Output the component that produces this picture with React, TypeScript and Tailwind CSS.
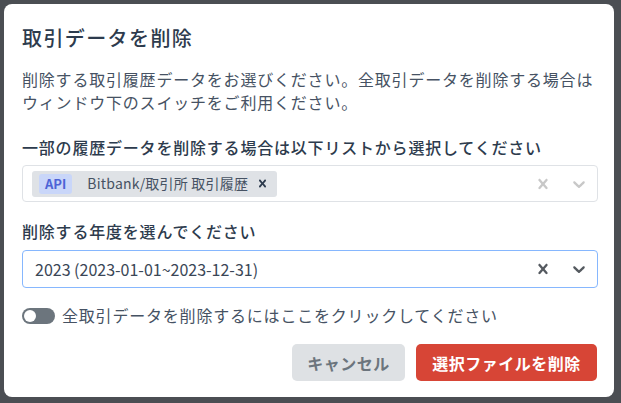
import React from "react";

const font = { fontFamily: '"Noto Sans CJK JP", "Noto Sans", sans-serif' };

const CrossIcon = ({ className }: { className?: string }) => (
  <svg viewBox="0 0 20 20" className={className} fill="currentColor">
    <path d="M14.348 14.849c-0.469 0.469-1.229 0.469-1.697 0l-2.651-3.030-2.651 3.029c-0.469 0.469-1.229 0.469-1.697 0-0.469-0.469-0.469-1.229 0-1.697l2.758-3.15-2.759-3.152c-0.469-0.469-0.469-1.228 0-1.697s1.228-0.469 1.697 0l2.652 3.031 2.651-3.031c0.469-0.469 1.228-0.469 1.697 0s0.469 1.229 0 1.697l-2.758 3.152 2.758 3.15c0.469 0.469 0.469 1.229 0 1.698z" />
  </svg>
);

const ChevronIcon = ({ className }: { className?: string }) => (
  <svg viewBox="0 0 20 20" className={className} fill="currentColor">
    <path d="M4.516 7.548c0.436-0.446 1.043-0.481 1.576 0l3.908 3.747 3.908-3.747c0.533-0.481 1.141-0.446 1.574 0 0.436 0.445 0.408 1.197 0 1.615-0.406 0.418-4.695 4.502-4.695 4.502-0.217 0.223-0.502 0.335-0.787 0.335s-0.57-0.112-0.789-0.335c0 0-4.287-4.084-4.695-4.502s-0.436-1.17 0-1.615z" />
  </svg>
);

export default function App() {
  return (
    <div className="w-[621px] h-[403px] bg-[#4b4e53] pt-[4px] pl-[4px] overflow-hidden" style={font}>
      <div className="w-[610px] h-[393px] bg-white rounded-[8px] pl-[18px] pr-[16px] pt-[20px]">
        <h2 className="text-[20px] leading-[28px] font-medium text-[#2d3b4d] tracking-[0.07em]">取引データを削除</h2>

        <p className="mt-[16px] text-[16px] leading-[23px] text-[#465263] tracking-[0.05em]">
          削除する取引履歴データをお選びください。全取引データを削除する場合は
          <br />
          ウィンドウ下のスイッチをご利用ください。
        </p>

        <div className="mt-[22px] text-[16px] leading-[23px] font-medium text-[#2d3b4d] tracking-[0.05em]">
          一部の履歴データを削除する場合は以下リストから選択してください
        </div>
        <div className="mt-[6px] h-[37px] border border-[#dfe2e6] rounded-[4px] flex items-center pl-[9px] pr-[8px]">
          <div className="flex-1 flex">
            <div className="h-[26px] bg-[#dfe2e6] rounded-[3px] flex items-center pl-[7px] pr-[7px]">
              <span className="h-[20px] px-[6px] rounded-[3px] bg-[#c9d6f9] text-[#4d63d6] text-[13px] font-bold leading-[20px]">API</span>
              <span className="ml-[15px] text-[14px] text-[#465263] tracking-[0.015em]">Bitbank/取引所 取引履歴</span>
              <CrossIcon className="ml-[7px] w-[15px] h-[15px] text-[#2d3b4d]" />
            </div>
          </div>
          <CrossIcon className="w-[20px] h-[20px] text-[#c8c8c8]" />
          <ChevronIcon className="ml-[16px] w-[20px] h-[20px] text-[#c8c8c8]" />
        </div>

        <div className="mt-[18px] text-[16px] leading-[23px] font-medium text-[#2d3b4d] tracking-[0.05em]">
          削除する年度を選んでください
        </div>
        <div className="mt-[7px] h-[38px] border border-[#86b7fe] rounded-[4px] flex items-center pl-[12px] pr-[8px]">
          <span className="flex-1 text-[16px] text-[#3a4656]">2023 (2023-01-01~2023-12-31)</span>
          <CrossIcon className="w-[20px] h-[20px] text-[#555a60]" />
          <ChevronIcon className="ml-[16px] w-[20px] h-[20px] text-[#555a60]" />
        </div>

        <div className="mt-[16px] flex items-center h-[23px]">
          <div className="w-[33px] h-[16px] rounded-full bg-[#6c757d] flex items-center px-[2px]">
            <div className="w-[12px] h-[12px] rounded-full bg-white" />
          </div>
          <span className="ml-[7px] text-[16px] leading-[23px] text-[#465263] tracking-[0.05em]">
            全取引データを削除するにはここをクリックしてください
          </span>
        </div>

        <div className="mt-[17px] flex justify-end gap-[11px] pr-[1px]">
          <button className="w-[113px] h-[37px] rounded-[5px] bg-[#dee1e4] text-[#6c757d] text-[16px] font-bold tracking-[0.03em]">キャンセル</button>
          <button className="w-[181px] h-[37px] rounded-[5px] bg-[#d74536] text-white text-[16px] font-bold tracking-[0.03em]">選択ファイルを削除</button>
        </div>
      </div>
    </div>
  );
}
